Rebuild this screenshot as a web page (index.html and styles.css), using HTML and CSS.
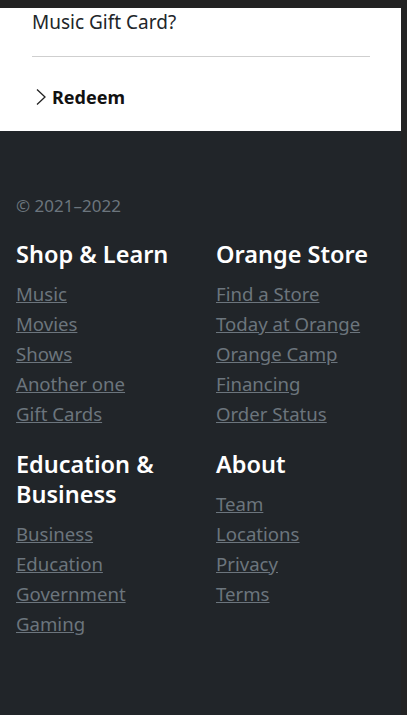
FILE: index.html
```html
<!DOCTYPE html>
<html lang="en">
<head>
<meta charset="utf-8">
<title>Footer</title>
<link rel="stylesheet" href="styles.css">
</head>
<body>
<div class="page">
  <section class="card">
    <p class="card-text">Music Gift Card?</p>
    <hr class="card-rule">
    <a class="redeem" href="#">
      <svg class="chev" width="12" height="18" viewBox="0 0 12 18" aria-hidden="true"><polyline points="2,1.5 10,9 2,16.5" fill="none" stroke="#222" stroke-width="1.3"/></svg>
      <span>Redeem</span>
    </a>
  </section>
  <footer class="footer">
    <p class="copy">© 2021–2022</p>
    <div class="cols">
      <div class="col">
        <h5 class="col-title">Shop &amp; Learn</h5>
        <ul class="links">
          <li><a href="#">Music</a></li>
          <li><a href="#">Movies</a></li>
          <li><a href="#">Shows</a></li>
          <li><a href="#">Another one</a></li>
          <li><a href="#">Gift Cards</a></li>
        </ul>
      </div>
      <div class="col">
        <h5 class="col-title">Orange Store</h5>
        <ul class="links">
          <li><a href="#">Find a Store</a></li>
          <li><a href="#">Today at Orange</a></li>
          <li><a href="#">Orange Camp</a></li>
          <li><a href="#">Financing</a></li>
          <li><a href="#">Order Status</a></li>
        </ul>
      </div>
      <div class="col">
        <h5 class="col-title">Education &amp;<br>Business</h5>
        <ul class="links">
          <li><a href="#">Business</a></li>
          <li><a href="#">Education</a></li>
          <li><a href="#">Government</a></li>
          <li><a href="#">Gaming</a></li>
        </ul>
      </div>
      <div class="col">
        <h5 class="col-title">About</h5>
        <ul class="links">
          <li><a href="#">Team</a></li>
          <li><a href="#">Locations</a></li>
          <li><a href="#">Privacy</a></li>
          <li><a href="#">Terms</a></li>
        </ul>
      </div>
    </div>
  </footer>
</div>
</body>
</html>
```

FILE: styles.css
```css
html, body {
  margin: 0;
  padding: 0;
  height: 100%;
}
body {
  background: #232323;
  font-family: "Noto Sans", "Open Sans", sans-serif;
  padding-top: 8px;
  box-sizing: border-box;
}
.page {
  width: 401px;
  min-height: 707px;
  background: #212529;
  display: flex;
  flex-direction: column;
}
.card {
  background: #fff;
  padding: 0 31px 20px 32px;
}
.card-text {
  margin: 0;
  font-size: 19px;
  line-height: 28px;
  color: #212529;
}
.card-rule {
  border: 0;
  border-top: 1px solid #cfcfcf;
  margin: 20px 0 26px;
}
.redeem {
  display: flex;
  align-items: center;
  gap: 5px;
  color: #111;
  text-decoration: none;
  font-weight: 700;
  font-size: 18px;
  line-height: 28px;
  padding-left: 3px;
}
.chev {
  display: block;
}
.footer {
  flex: 1;
  padding: 63px 16px 40px;
}
.copy {
  margin: 0 0 21px;
  color: #6c757d;
  font-size: 17px;
  line-height: 24px;
}
.cols {
  display: grid;
  grid-template-columns: 200px 1fr;
  row-gap: 20px;
}
.col-title {
  margin: 0 0 10px;
  color: #fff;
  font-size: 23.5px;
  line-height: 30px;
  font-weight: 600;
}
.links {
  list-style: none;
  margin: 0;
  padding: 0;
}
.links li {
  font-size: 18.6px;
  line-height: 30px;
}
.links a {
  color: #6c757d;
  text-decoration: underline;
}
```
